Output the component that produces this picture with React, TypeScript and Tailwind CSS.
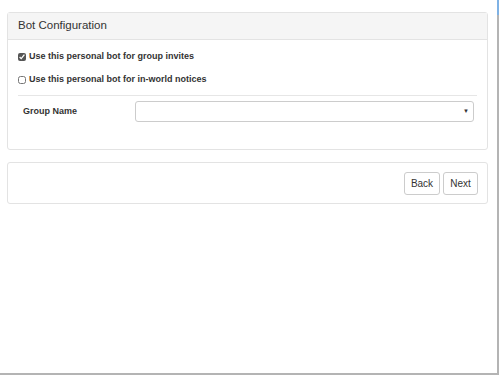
export default function App() {
  return (
    <div
      className="relative w-[500px] h-[375px] bg-white overflow-hidden"
      style={{ fontFamily: '"Liberation Sans", Arial, sans-serif' }}
    >
      <div className="w-[499px] h-[375px] border-r-2 border-b-2 border-[#b4b4b4] pt-[12px] pl-[7px] pr-[9px]">
        {/* config panel */}
        <div className="w-[481px] border border-[#e3e3e3] rounded-[3px]">
          <div className="h-[27px] bg-[#f5f5f5] border-b border-[#e3e3e3] px-[10px] flex items-center text-[11.5px] text-[#333]">
            Bot Configuration
          </div>
          <div className="px-[10px] pt-[11px] pb-[27px]">
            <label className="flex items-center gap-[3px] h-[12px] text-[9px] font-bold text-[#333]">
              <input type="checkbox" defaultChecked className="w-[8px] h-[8px] m-0 accent-[#555]" />
              Use this personal bot for group invites
            </label>
            <label className="flex items-center gap-[3px] h-[12px] mt-[11px] text-[9px] font-bold text-[#333]">
              <input type="checkbox" className="w-[8px] h-[8px] m-0" />
              Use this personal bot for in-world notices
            </label>
            <div className="mt-[9px] border-t border-[#e6e6e6]" />
            <div className="flex items-center mt-[5px]">
              <div className="w-[117px] pl-[5px] text-[9px] font-bold text-[#333]">Group Name</div>
              <div className="w-[339px] h-[21px] border border-[#ccc] rounded-[3px] flex items-center justify-end pr-[4px]">
                <span className="text-[6px] text-[#333]">▼</span>
              </div>
            </div>
          </div>
        </div>
        {/* actions panel */}
        <div className="w-[481px] h-[42px] mt-[12px] border border-[#e3e3e3] rounded-[3px] flex items-center justify-end gap-[3px] pr-[9px]">
          <button className="w-[36px] h-[23px] border border-[#ccc] rounded-[3px] bg-white text-[10px] text-[#333]">Back</button>
          <button className="w-[35px] h-[23px] border border-[#ccc] rounded-[3px] bg-white text-[10px] text-[#333]">Next</button>
        </div>
      </div>
      <div className="absolute right-[1px] top-0 w-[2px] h-[15px] bg-[#7fb2e5]" />
    </div>
  );
}
